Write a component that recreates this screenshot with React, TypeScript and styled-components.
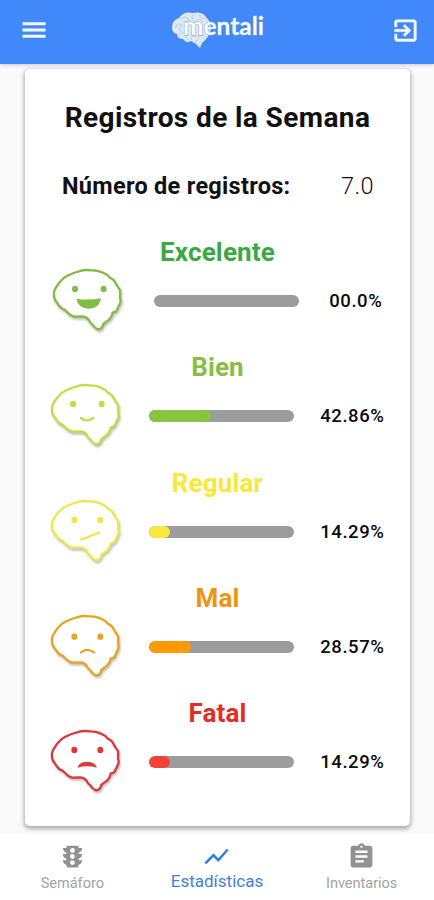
import React from "react";
import styled, { createGlobalStyle } from "styled-components";
import { MdMenu, MdExitToApp, MdTraffic, MdShowChart, MdAssignment } from "react-icons/md";

const GlobalStyle = createGlobalStyle`
  * { box-sizing: border-box; }
  body { margin: 0; background: #fafafa; font-family: Roboto, "Liberation Sans", sans-serif; }
`;

const Screen = styled.div`
  width: 434px;
  height: 900px;
  display: flex;
  flex-direction: column;
  overflow: hidden;
`;

const Header = styled.header`
  height: 64px;
  flex: none;
  display: grid;
  grid-template-columns: 94px 1fr 94px;
  padding: 0 14px 4px 19px;
  align-items: center;
  background: #4189fb;
  color: #f4f9ff;
  box-shadow: 0 1px 4px rgba(0, 0, 0, 0.2);
`;

const IconButton = styled.button<{ $end?: boolean }>`
  display: flex;
  justify-self: ${(p) => (p.$end ? "end" : "start")};
  border: 0;
  padding: 0;
  background: none;
  color: inherit;
  path { stroke-width: 0.4px; }
  path[fill="none"] { stroke: none; }
`;

const Logo = styled.svg`
  width: 96px;
  height: 40px;
  justify-self: center;
  margin-right: 2px;
`;

const Main = styled.main`
  flex: 1;
  min-height: 0;
  padding: 5px 24px 8px 25px;
`;

const Card = styled.section`
  height: 757px;
  border-radius: 5px;
  background: #fff;
  box-shadow: 0 2px 4px 1px rgba(0, 0, 0, 0.32);
  padding-top: 32px;
`;

const Title = styled.h1`
  margin: 0;
  font-size: 28px;
  line-height: 34px;
  font-weight: 700;
  text-align: center;
  letter-spacing: 0.4px;
  color: #111;
`;

const Total = styled.div`
  display: flex;
  justify-content: space-between;
  align-items: center;
  margin: 34px 36px 34px 37px;
  height: 34px;
  font-size: 23.5px;
  color: #111;
`;

const TotalLabel = styled.span`
  font-weight: 700;
  letter-spacing: 0.28px;
`;

const TotalValue = styled.span`
  font-weight: 300;
  letter-spacing: 0.4px;
`;

const Mood = styled.article`
  height: 115.3px;
`;

const MoodName = styled.h2<{ $color: string }>`
  margin: 0;
  font-size: 26px;
  line-height: 30px;
  font-weight: 700;
  text-align: center;
  letter-spacing: 0.15px;
  color: ${(p) => p.$color};
`;

const MoodRow = styled.div<{ $empty: boolean }>`
  display: grid;
  grid-template-columns: 73.3px 145px auto;
  column-gap: ${(p) => (p.$empty ? "29px" : "26px")};
  align-items: center;
  height: 67px;
  padding-left: ${(p) => (p.$empty ? "27px" : "25px")};
`;

const Face = styled.svg`
  display: block;
  width: 73.3px;
  height: 66.7px;
  margin-top: -2px;
  overflow: visible;
  filter: drop-shadow(1.5px 2px 1px rgba(0, 0, 0, 0.25));
`;

const Track = styled.div`
  height: 12px;
  margin-top: 1px;
  border-radius: 6px;
  background: #9c9c9c;
  overflow: hidden;
`;

const Fill = styled.div<{ $color: string }>`
  height: 100%;
  border-radius: 6px;
  background: ${(p) => p.$color};
`;

const Percent = styled.span<{ $empty: boolean }>`
  margin-left: ${(p) => (p.$empty ? "1px" : "0")};
  margin-top: 1px;
  font-size: 18.5px;
  font-weight: 500;
  letter-spacing: 0.55px;
  color: #0c0c0c;
`;

const Nav = styled.nav`
  height: 66px;
  flex: none;
  display: grid;
  grid-template-columns: repeat(3, 1fr);
  background: #fff;
  position: relative;
`;

const Tab = styled.a<{ $active?: boolean }>`
  display: flex;
  flex-direction: column;
  align-items: center;
  padding-top: 8px;
  font-size: ${(p) => (p.$active ? "17px" : "14.5px")};
  line-height: 20px;
  color: ${(p) => (p.$active ? "#3f7fe0" : "#a3a3a3")};
  svg { flex: none; color: ${(p) => (p.$active ? "#2f7bed" : "#919191")}; }
`;

const TabLabel = styled.span<{ $active?: boolean }>`
  margin-top: ${(p) => (p.$active ? "0" : "3px")};
`;

type Expression = "grin" | "smile" | "slanted" | "frown" | "upset";

const BRAIN =
  "M36 122C34 111 41 101 47 93Q57 76 76 65Q95 55 113 51Q130 46 147 49Q166 48 181 55Q195 60 203 71Q217 76 222 90Q226 98 234 108Q235 118 234 131Q239 143 232 152Q228 163 222 172L212 176Q210 189 201 197Q191 204 184 210Q181 225 168 226Q158 222 151 211Q144 207 140 197Q132 187 121 187L96 188Q84 184 76 175Q69 165 61 164Q51 157 43 143Q36 136 36 122Z";

const mouths: Record<Expression, (c: string) => React.ReactNode> = {
  grin: (c) => <path d="M103 134Q141 140 177 133Q173 164 140 164Q109 164 103 134Z" fill={c} stroke="none" />,
  smile: () => <path d="M123 147Q141 161 160 147" />,
  slanted: () => <path d="M123 163Q142 159 151 153L178 143" />,
  frown: () => <path d="M123 157Q142 142 162 157" />,
  upset: (c) => <path d="M113 158Q117 140 142 140Q166 142 171 158Q141 150 113 158Z" fill={c} stroke="none" />,
};

function BrainFace({ expression, color }: { expression: Expression; color: string }) {
  const eyeY = expression === "frown" ? 110 : 105;
  const eyes = expression === "grin" || expression === "smile" ? [99, 185] : [103, 181];
  return (
    <Face viewBox="30 36 220 200" fill="none" stroke={color} strokeWidth="7" strokeLinecap="round" strokeLinejoin="round">
      <path d={BRAIN} fill="#fff" />
      {eyes.map((x) => (
        <ellipse key={x} cx={x} cy={eyeY} rx="9" ry="9.5" fill={color} stroke="none" />
      ))}
      {mouths[expression](color)}
    </Face>
  );
}

function MentaliLogo() {
  return (
    <Logo viewBox="0 0 96 40" aria-label="mentali">
      <path
        d="M1 18Q1 10 8 8Q13 1 22 3Q31 1 35 7Q42 14 39 23Q35 30 31 33L29 38L25 34L20 31Q15 34 12 29Q6 29 6 24Q1 23 1 18Z"
        fill="#dce8f2"
      />
      <g fill="none" stroke="#a9c2d8" strokeWidth="0.7">
        <path d="M4 18Q7 12 11 15Q7 18 10 22M10 9Q15 5 18 10Q13 12 16 16M22 5Q19 9 24 12Q29 7 32 12M8 25Q14 20 16 26Q13 28 17 30M20 30Q20 24 26 27Q31 23 34 27M24 32L28 29M29 4Q28 8 34 9" />
      </g>
      <text
        x="12"
        y="25"
        textLength="81"
        lengthAdjust="spacingAndGlyphs"
        fontFamily="Lato, sans-serif"
        fontWeight="700"
        fontSize="24"
        fill="#f8fcff"
        stroke="#7aa3cc"
        strokeWidth="0.9"
        paintOrder="stroke"
      >
        mentali
      </text>
    </Logo>
  );
}

const moods: { name: string; value: number; label: string; text: string; bar: string; line: string; face: Expression }[] = [
  { name: "Excelente", value: 0, label: "00.0%", text: "#39a943", bar: "#43a047", line: "#82bd43", face: "grin" },
  { name: "Bien", value: 42.86, label: "42.86%", text: "#87be43", bar: "#88c440", line: "#c5dc45", face: "smile" },
  { name: "Regular", value: 14.29, label: "14.29%", text: "#f9e839", bar: "#fae83a", line: "#f2e64d", face: "slanted" },
  { name: "Mal", value: 28.57, label: "28.57%", text: "#f1930f", bar: "#ff9a05", line: "#e9a322", face: "frown" },
  { name: "Fatal", value: 14.29, label: "14.29%", text: "#e32d23", bar: "#f44336", line: "#dc3a3a", face: "upset" },
];

export default function App() {
  return (
    <Screen>
      <GlobalStyle />
      <Header>
        <IconButton aria-label="Menú"><MdMenu size={30} stroke="currentColor" /></IconButton>
        <MentaliLogo />
        <IconButton $end aria-label="Salir"><MdExitToApp size={29} stroke="currentColor" /></IconButton>
      </Header>
      <Main>
        <Card>
          <Title>Registros de la Semana</Title>
          <Total>
            <TotalLabel>Número de registros:</TotalLabel>
            <TotalValue>7.0</TotalValue>
          </Total>
          {moods.map((m) => (
            <Mood key={m.name}>
              <MoodName $color={m.text}>{m.name}</MoodName>
              <MoodRow $empty={m.value === 0}>
                <BrainFace expression={m.face} color={m.line} />
                <Track>
                  <Fill $color={m.bar} style={{ width: `${m.value}%` }} />
                </Track>
                <Percent $empty={m.value === 0}>{m.label}</Percent>
              </MoodRow>
            </Mood>
          ))}
        </Card>
      </Main>
      <Nav>
        <Tab><MdTraffic size={29} /><TabLabel>Semáforo</TabLabel></Tab>
        <Tab $active><MdShowChart size={29} /><TabLabel $active>Estadísticas</TabLabel></Tab>
        <Tab><MdAssignment size={29} /><TabLabel>Inventarios</TabLabel></Tab>
      </Nav>
    </Screen>
  );
}
